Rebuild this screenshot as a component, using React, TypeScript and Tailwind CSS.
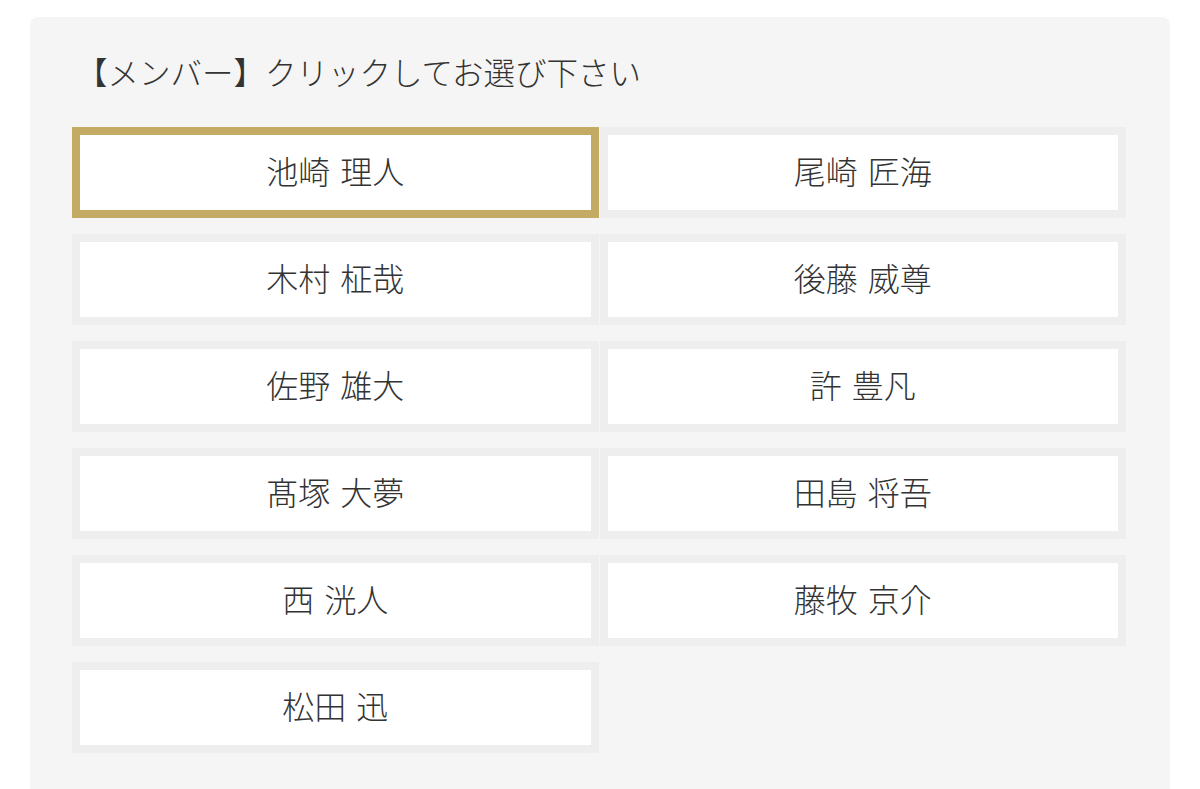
import React, { useState } from 'react';

const members = [
  '池崎 理人',
  '尾崎 匠海',
  '木村 柾哉',
  '後藤 威尊',
  '佐野 雄大',
  '許 豊凡',
  '髙塚 大夢',
  '田島 将吾',
  '西 洸人',
  '藤牧 京介',
  '松田 迅',
];

export default function App() {
  const [selected, setSelected] = useState(0);

  return (
    <div
      className="min-h-[789px] bg-white pt-[17px] px-[30px]"
      style={{ fontFamily: '"Noto Sans CJK JP", "Noto Sans", sans-serif' }}
    >
      <div className="bg-[#f5f5f5] rounded-t-[8px] pl-[42px] pr-[44px] pt-[32px] pb-[40px] min-h-[772px]">
        <h2 className="pl-[4px] text-[31.5px] leading-[45px] text-[#333333] font-light">
          【メンバー】クリックしてお選び下さい
        </h2>

        <div className="grid grid-cols-2 gap-x-px gap-y-4 mt-[33px]">
          {members.map((name, i) => (
            <button
              key={name}
              onClick={() => setSelected(i)}
              className={`h-[91px] bg-white border-[8px] pb-[6px] text-[32px] leading-none [word-spacing:3px] text-[#333333] font-light flex items-center justify-center ${
                selected === i ? 'border-[#c4ab64]' : 'border-[#eeeeee]'
              }`}
            >
              {name}
            </button>
          ))}
        </div>
      </div>
    </div>
  );
}
